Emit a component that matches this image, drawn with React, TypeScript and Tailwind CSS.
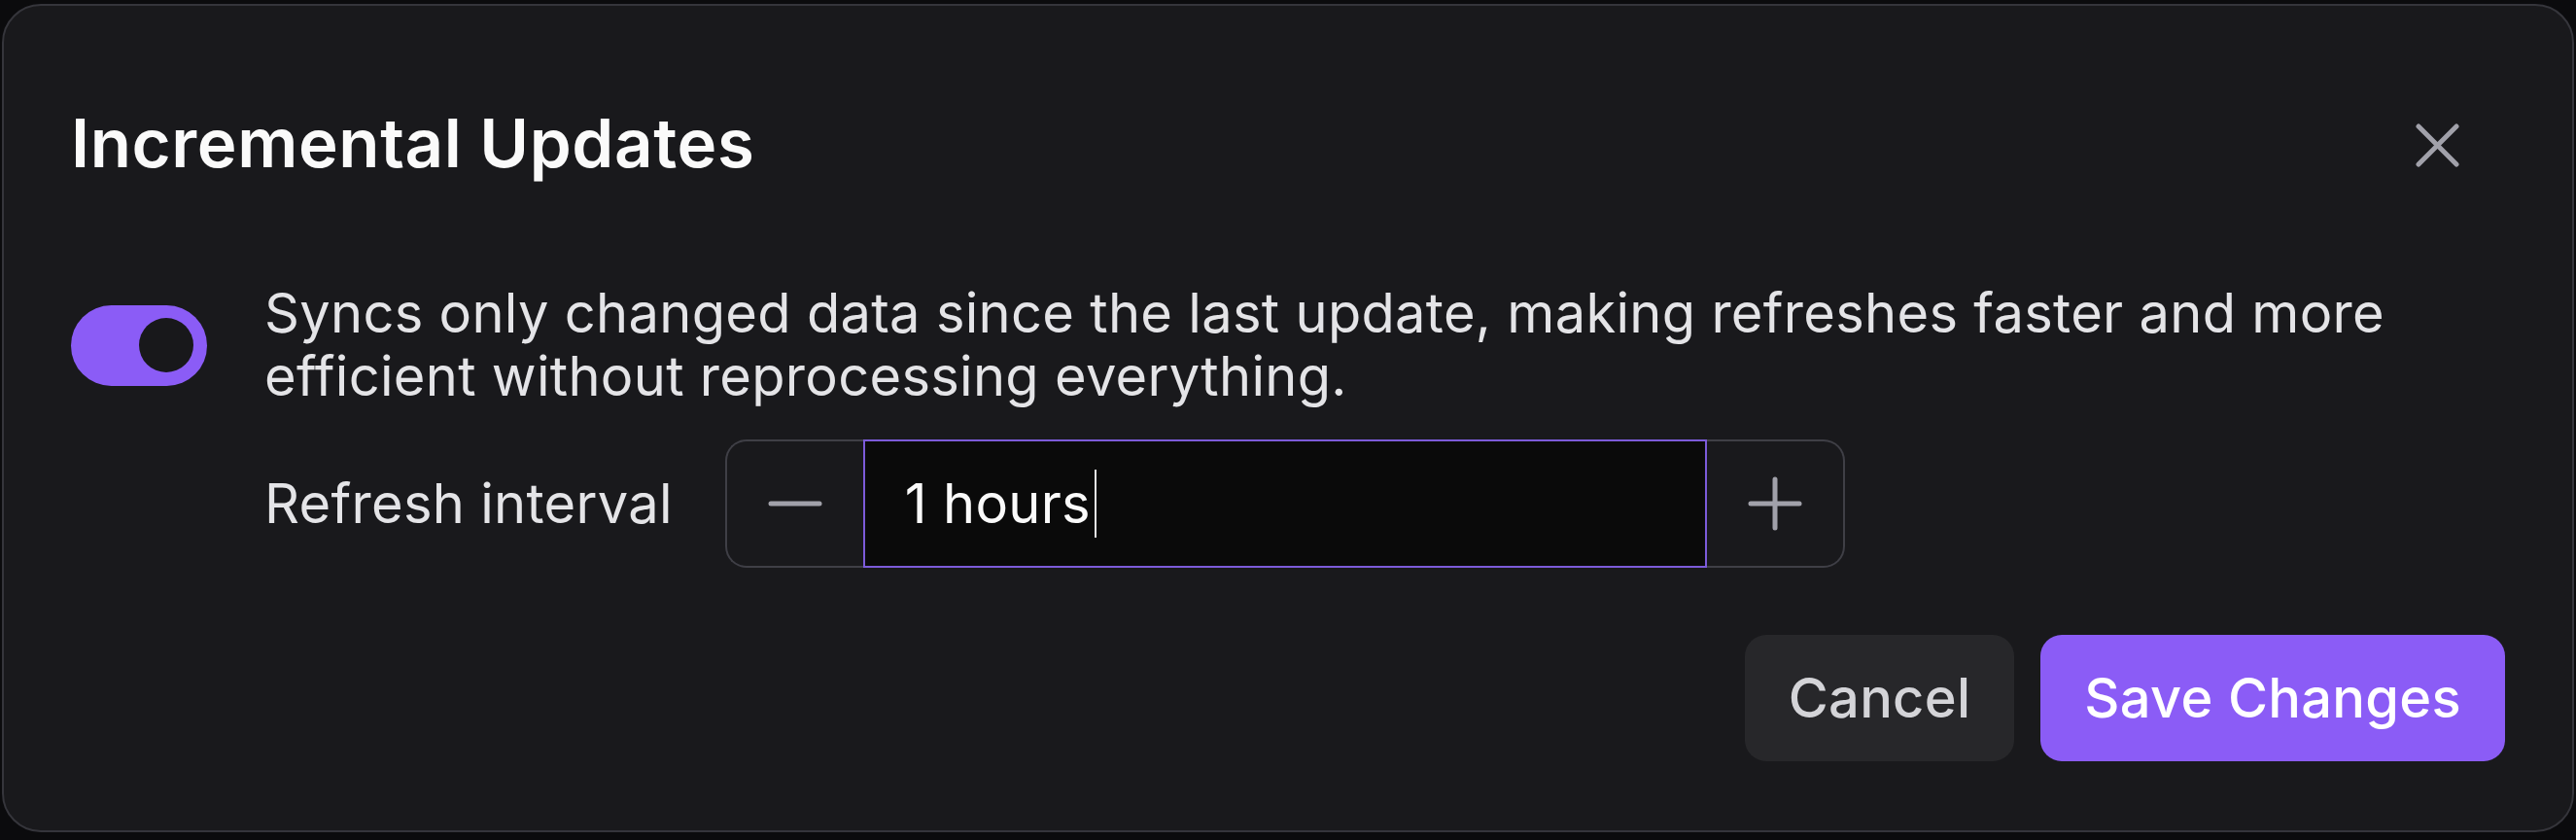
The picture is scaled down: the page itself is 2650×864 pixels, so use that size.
import { useState } from "react";

const CloseIcon = () => (
  <svg width="45" height="45" viewBox="0 0 45 45" fill="none" stroke="currentColor" strokeWidth="5" strokeLinecap="round">
    <line x1="3" y1="3" x2="42" y2="42" />
    <line x1="42" y1="3" x2="3" y2="42" />
  </svg>
);

const MinusIcon = () => (
  <svg width="56" height="56" viewBox="0 0 56 56" fill="none" stroke="currentColor" strokeWidth="5" strokeLinecap="round">
    <line x1="3" y1="28" x2="53" y2="28" />
  </svg>
);

const PlusIcon = () => (
  <svg width="56" height="56" viewBox="0 0 56 56" fill="none" stroke="currentColor" strokeWidth="5" strokeLinecap="round">
    <line x1="3" y1="28" x2="53" y2="28" />
    <line x1="28" y1="3" x2="28" y2="53" />
  </svg>
);

export default function App() {
  const [enabled, setEnabled] = useState(true);
  const [hours, setHours] = useState(1);

  return (
    <div className="h-[864px] bg-[#0b0b0d] pt-[4px] pl-[2px] font-['Inter','Noto_Sans',sans-serif]">
      <div className="w-[2646px] h-[852px] rounded-[40px] border-2 border-[#35353b] bg-[#19191c] pt-[100px] pb-[70px] px-[69px] flex flex-col">
        {/* header */}
        <div className="flex items-center justify-between h-[82px]">
          <h2 className="text-[69px] leading-[82px] font-semibold tracking-[0.6px] text-[#fafafa]">Incremental Updates</h2>
          <button className="mr-[47px] mt-[4px] text-[#a1a1aa]" aria-label="Close">
            <CloseIcon />
          </button>
        </div>

        {/* toggle + description */}
        <div className="mt-[102px] flex items-center gap-[59px]">
          <button
            onClick={() => setEnabled(!enabled)}
            className={`w-[140px] h-[83px] shrink-0 rounded-full flex items-center px-[14px] ${
              enabled ? "bg-[#8b5cf6] justify-end" : "bg-[#3f3f46] justify-start"
            }`}
          >
            <span className="w-[56px] h-[56px] rounded-full bg-[#18181b]" />
          </button>
          <p className="text-[56px] leading-[65px] tracking-[0.3px] text-[#e4e4e7]">
            Syncs only changed data since the last update, making refreshes faster and more efficient without
            reprocessing everything.
          </p>
        </div>

        {/* refresh interval */}
        <div className="mt-[32px] ml-[199px] flex items-center gap-[54px]">
          <span className="text-[56px] leading-[66px] tracking-[0.3px] text-[#e4e4e7]">Refresh interval</span>
          <div className="flex h-[132px] w-[1152px]">
            <button
              onClick={() => setHours(Math.max(1, hours - 1))}
              className="w-[142px] flex items-center justify-center rounded-l-[22px] border-2 border-r-0 border-[#3f3f46] text-[#a1a1aa]"
            >
              <MinusIcon />
            </button>
            <div className="flex-1 flex items-center border-2 border-[#7c5bd9] bg-[#0a0a0a] pl-[41px]">
              <span className="text-[56px] leading-[66px] tracking-[0.3px] text-[#fafafa]">{hours} hours</span>
              <span className="ml-[4px] w-[2px] h-[70px] bg-[#e4e4e7]" />
            </div>
            <button
              onClick={() => setHours(hours + 1)}
              className="w-[142px] flex items-center justify-center rounded-r-[22px] border-2 border-l-0 border-[#3f3f46] text-[#a1a1aa]"
            >
              <PlusIcon />
            </button>
          </div>
        </div>

        {/* footer */}
        <div className="mt-[69px] flex justify-end gap-[27px]">
          <button className="h-[130px] px-[45px] rounded-[22px] bg-[#27272a] text-[56px] font-medium tracking-[0.3px] text-[#d4d4d8]">
            Cancel
          </button>
          <button className="h-[130px] px-[45px] rounded-[22px] bg-[#8b5cf6] text-[56px] font-medium tracking-[0.3px] text-white">
            Save Changes
          </button>
        </div>
      </div>
    </div>
  );
}
